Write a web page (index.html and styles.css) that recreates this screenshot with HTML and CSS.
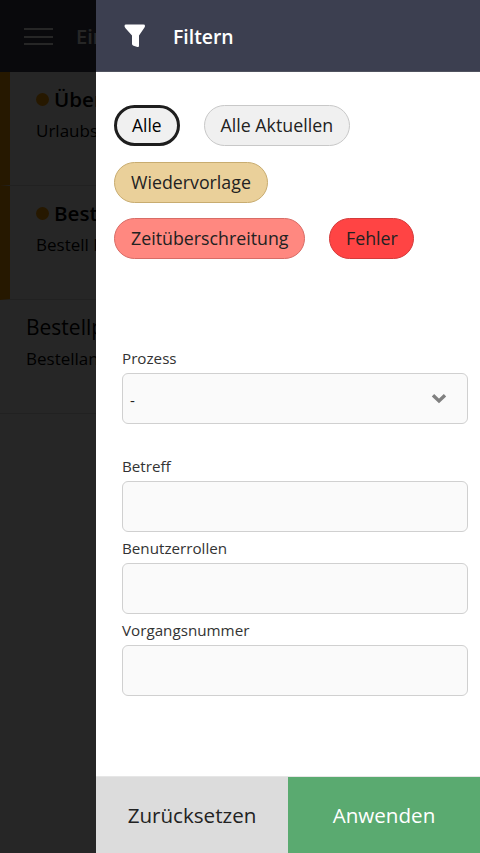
FILE: index.html
```html
<!DOCTYPE html>
<html lang="de">
<head>
<meta charset="utf-8">
<title>Filtern</title>
<link rel="stylesheet" href="styles.css">
</head>
<body>
<div class="page">
  <header class="topbar">
    <div class="burger"><span></span><span></span><span></span></div>
    <div class="topbar-title">Eingang</div>
  </header>
  <div class="row row-flag">
    <div class="row-title"><span class="dot"></span>Überstunden</div>
    <div class="row-sub">Urlaubsantrag</div>
  </div>
  <div class="row row-flag">
    <div class="row-title"><span class="dot"></span>Bestellung</div>
    <div class="row-sub">Bestell Nr</div>
  </div>
  <div class="row row-plain">
    <div class="row-title-plain">Bestellprozess</div>
    <div class="row-sub">Bestellanforderung</div>
  </div>
</div>
<div class="overlay"></div>
<aside class="drawer">
  <header class="drawer-head">
    <svg class="funnel" width="22" height="24" viewBox="0 0 22 24"><path d="M0.5 2 Q0.5 0.6 2 0.6 H19.5 Q21 0.6 21 2 Q21 3 20 4.2 L15 11.5 V21.8 Q15 23.4 13.4 22.9 L9.5 21.8 Q8 21.3 8 20 V11.5 L1.5 4.2 Q0.5 3 0.5 2 Z" fill="#fff"/></svg>
    <h1 class="drawer-title">Filtern</h1>
  </header>
  <div class="drawer-body">
    <div class="chips">
      <div class="chip-line">
        <span class="chip chip-active">Alle</span>
        <span class="chip chip-grey">Alle Aktuellen</span>
      </div>
      <div class="chip-line">
        <span class="chip chip-tan">Wiedervorlage</span>
      </div>
      <div class="chip-line">
        <span class="chip chip-salmon">Zeitüberschreitung</span>
        <span class="chip chip-red">Fehler</span>
      </div>
    </div>
    <div class="form">
      <div class="field field-select">
        <label class="label">Prozess</label>
        <div class="box box-select">
          <span class="select-value">-</span>
          <svg class="chev" width="16" height="11" viewBox="0 0 16 11"><path d="M2 2.2 L8 8 L14 2.2" fill="none" stroke="#808080" stroke-width="3.4"/></svg>
        </div>
      </div>
      <div class="field"><label class="label">Betreff</label><div class="box"></div></div>
      <div class="field"><label class="label">Benutzerrollen</label><div class="box"></div></div>
      <div class="field"><label class="label">Vorgangsnummer</label><div class="box"></div></div>
    </div>
  </div>
  <footer class="drawer-foot">
    <div class="foot-btn foot-reset">Zurücksetzen</div>
    <div class="foot-btn foot-apply">Anwenden</div>
  </footer>
</aside>
</body>
</html>
```
FILE: styles.css
```css
* { box-sizing: border-box; }
html, body { margin: 0; padding: 0; height: 853px; overflow: hidden; }
body { font-family: "Open Sans", "Noto Sans", sans-serif; background: #fff; color: #000; position: relative; }

.page { height: 853px; overflow: hidden; }
.topbar { height: 72px; background: #3c3f50; display: flex; align-items: center; padding-left: 24px; gap: 24px; }
.burger { width: 29px; display: flex; flex-direction: column; gap: 5.5px; margin-top: 1px; }
.burger span { display: block; height: 2px; background: #fff; }
.topbar-title { color: #fff; font-size: 20px; font-weight: 600; white-space: nowrap; margin-left: -1px; }
.row { height: 114px; border-bottom: 1px solid #ddd; }
.row-flag { border-left: 10px solid #ff9f00; padding: 13px 0 0 26px; }
.row-plain { padding: 13px 0 0 26px; }
.row-title { font-size: 20.6px; font-weight: 600; line-height: 28px; display: flex; align-items: center; color: #000; white-space: nowrap; }
.row-title-plain { font-size: 21px; line-height: 28px; white-space: nowrap; }
.dot { width: 13px; height: 13px; border-radius: 50%; background: #ff9f00; margin-right: 5px; }
.row-sub { font-size: 17px; line-height: 23px; margin-top: 6px; white-space: nowrap; }

.overlay { position: absolute; inset: 0; background: rgba(0, 0, 0, 0.85); }

.drawer { position: absolute; top: 0; right: 0; bottom: 0; width: 384px; background: #fff; display: flex; flex-direction: column; }
.drawer-head { height: 72px; flex: none; background: #3c3f50; display: flex; align-items: center; padding-left: 28px; border-bottom: 1px solid #50535f; }
.funnel { flex: none; }
.drawer-title { margin: 2px 0 0 27px; color: #fff; font-size: 19.4px; font-weight: 600; line-height: 27px; }
.drawer-body { flex: 1; padding: 33px 12px 0 26px; min-height: 0; }

.chips { display: flex; flex-direction: column; gap: 15.5px; margin-left: -8px; }
.chip-line { display: flex; gap: 24px; }
.chip { height: 41px; border-radius: 21px; border: 1px solid; padding: 0 16px; font-size: 17.8px; line-height: 38px; color: #222; white-space: nowrap; }
.chip-active { background: #f0f0f0; border: 3px solid #1e1e1e; padding: 0 15px; line-height: 35px; color: #000; font-weight: 500; font-size: 17.4px; }
.chip-grey { background: #f0f0f0; border-color: #c8c8c8; }
.chip-tan { background: #ead09a; border-color: #c8ac70; }
.chip-salmon { background: #ff8880; border-color: #d86c66; }
.chip-red { background: #ff4444; border-color: #d43a3a; padding: 0 15.5px; }

.form { margin-top: 90px; }
.field { display: flex; flex-direction: column; margin-top: 7px; }
.field-select { margin-top: 0; margin-bottom: 33px; }
.label { font-size: 15.2px; line-height: 19px; color: #333; margin-bottom: 5px; }
.box { height: 51px; background: #fafafa; border: 1px solid #d0d0d0; border-radius: 6px; }
.box-select { display: flex; align-items: center; justify-content: space-between; padding: 0 20px 0 7px; }
.select-value { font-size: 15.2px; line-height: 19px; margin-top: 4px; color: #222; }
.chev { flex: none; }

.drawer-foot { height: 77px; flex: none; display: flex; border-top: 1px solid #e6e6e6; }
.foot-btn { flex: 1; display: flex; align-items: center; justify-content: center; font-size: 20.6px; }
.foot-reset { background: #dcdcdc; color: #222; }
.foot-apply { background: #5aaa70; color: #fff; }
```
